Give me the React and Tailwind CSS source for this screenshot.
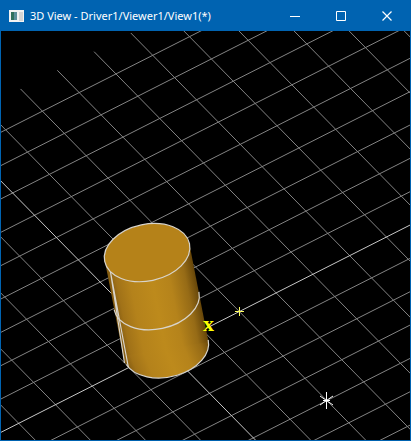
const U = [21.88, 22.26];
const V = [36.77, -18.63];
const ORIGIN = [165.8, 348.8];

const at = (i, j) => [ORIGIN[0] + i * U[0] + j * V[0], ORIGIN[1] + i * U[1] + j * V[1]];

function GridLine({ from, to, bright }) {
  return (
    <line x1={from[0]} y1={from[1]} x2={to[0]} y2={to[1]} stroke={bright ? "#c8c8c8" : "#848484"} strokeWidth="1" />
  );
}

const range = (a, b) => Array.from({ length: b - a + 1 }, (_, k) => a + k);

function Scene() {
  return (
    <svg viewBox="1 31 409 409" className="block w-full bg-black" role="img" aria-label="3D view of a cylinder on a grid">
      <defs>
        <linearGradient id="side" gradientUnits="userSpaceOnUse" x1="113" y1="309" x2="199" y2="292">
          <stop offset="0" stopColor="#7c5610" />
          <stop offset="0.1" stopColor="#a17218" />
          <stop offset="0.25" stopColor="#b4821b" />
          <stop offset="0.5" stopColor="#bd8a1c" />
          <stop offset="0.7" stopColor="#b5831b" />
          <stop offset="0.88" stopColor="#966b16" />
          <stop offset="1" stopColor="#654509" />
        </linearGradient>
      </defs>
      {range(-9, 14).map((i) => i !== 0 && <GridLine key={"v" + i} from={at(i, -16)} to={at(i, 16)} />)}
      {range(-12, 16).map((j) => j !== 0 && <GridLine key={"u" + j} from={at(-10, j)} to={at(16, j)} />)}
      <GridLine from={at(0, -8)} to={at(0, 8)} bright />
      <GridLine from={at(-10, 0)} to={at(8, 0)} bright />

      <ellipse cx="165.8" cy="348.8" rx="43.3" ry="28.3" transform="rotate(-11.8 165.8 348.8)" fill="url(#side)" />
      <path d="M104.5 259L189.8 246L208.5 342L123.3 356Z" fill="url(#side)" />
      <g fill="none" stroke="#d8d4cc" strokeWidth="1.2">
        <path d="M126.3 364.5A43.3 28.3 -11.8 0 0 208.2 339.9" />
        <path d="M114.1 309.6A43.3 28.3 -11.8 0 0 198.9 291.8" />
        <path d="M124.5 363L110.5 272L128.3 367" />
      </g>
      <ellipse cx="147.1" cy="252.6" rx="43.3" ry="28.3" transform="rotate(-11.8 147.1 252.6)" fill="#b58219" stroke="#d8d4cc" strokeWidth="1.2" />

      <text x="203" y="331" fill="#ffff00" fontSize="22" fontWeight="bold" className="font-['Liberation_Serif',serif]">x</text>
      <path d="M235 311.5H244M239.5 307V316" stroke="#ffff60" fill="none" />
      <path d="M326.5 392V409M323 400.5H330M320 396L333 405M320 405L333 396" stroke="#fff" fill="none" />
    </svg>
  );
}

function TitleButton({ label, children }) {
  return (
    <button type="button" aria-label={label} className="flex h-full w-[46px] items-center justify-center">
      <svg width="10" height="10" viewBox="0 0 10 10" fill="none" stroke="#fff">{children}</svg>
    </button>
  );
}

export default function App() {
  return (
    <main className="border border-[#0063b1] bg-black font-['Noto_Sans','Open_Sans',sans-serif]">
      <header className="flex h-[30px] items-center bg-[#0063b1] pl-2 text-white">
        <svg width="15" height="12" viewBox="0 0 15 12" className="mr-1.5 shrink-0">
          <rect width="15" height="12" fill="#f2f2f2" />
          <rect x="2" y="2" width="6" height="8" fill="#2f6f5c" />
          <rect x="5" y="2" width="3" height="8" fill="#5b8f9a" />
          <rect x="10" y="2" width="4" height="9" fill="#d4d4d4" />
        </svg>
        <h1 className="min-w-0 flex-1 truncate text-[11px]">3D View - Driver1/Viewer1/View1(*)</h1>
        <TitleButton label="Minimize"><path d="M0 5.5H10" /></TitleButton>
        <TitleButton label="Maximize"><path d="M.5 .5H9.5V9.5H.5Z" /></TitleButton>
        <TitleButton label="Close"><path d="M.5 .5L9.5 9.5M9.5 .5L.5 9.5" strokeWidth="1.2" /></TitleButton>
      </header>
      <Scene />
    </main>
  );
}
